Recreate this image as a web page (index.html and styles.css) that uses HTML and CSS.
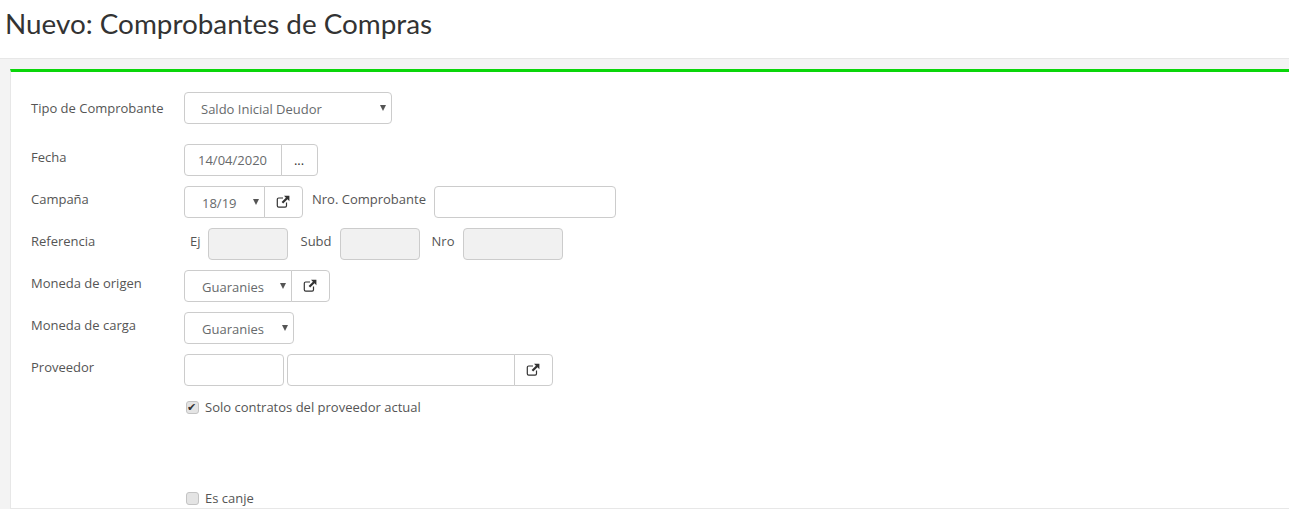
FILE: index.html
```html
<!DOCTYPE html>
<html lang="es">
<head>
    <meta charset="UTF-8">
    <title>Nuevo: Comprobantes de Compras</title>
    <link rel="stylesheet" href="styles.css">
</head>
<body>
    <svg class="defs" width="0" height="0">
        <symbol id="ext" viewBox="0 0 14 14">
            <path d="M10.5 7.6v3.2a1.4 1.4 0 0 1-1.4 1.4H2.7a1.4 1.4 0 0 1-1.4-1.4V4.4A1.4 1.4 0 0 1 2.7 3H7" fill="none" stroke="#333" stroke-width="1.2"/>
            <path d="M8 .8h5.4v5.4l-1.9-1.9-4.3 4.3-1.6-1.6 4.3-4.3z" fill="#333"/>
        </symbol>
    </svg>

    <header class="page-head">
        <h1>Nuevo: Comprobantes de Compras</h1>
    </header>

    <main class="page-body">
        <form class="panel">
            <div class="row row-first">
                <label class="lbl">Tipo de Comprobante</label>
                <div class="select w-tipo"><select><option>Saldo Inicial Deudor</option></select></div>
            </div>

            <div class="row">
                <label class="lbl">Fecha</label>
                <div class="group">
                    <input class="ctl w-fecha" type="text" value="14/04/2020">
                    <button class="addon w-dots" type="button">...</button>
                </div>
            </div>

            <div class="row">
                <label class="lbl">Campaña</label>
                <div class="group">
                    <div class="select w-camp"><select><option>18/19</option></select></div>
                    <button class="addon" type="button"><svg class="ico"><use href="#ext"/></svg></button>
                </div>
                <label class="lbl-in nro-comp">Nro. Comprobante</label>
                <input class="ctl solo w-nro" type="text">
            </div>

            <div class="row">
                <label class="lbl">Referencia</label>
                <label class="lbl-in ref-ej">Ej</label>
                <input class="ctl solo w-ref" type="text" disabled>
                <label class="lbl-in ref-subd">Subd</label>
                <input class="ctl solo w-ref" type="text" disabled>
                <label class="lbl-in ref-nro">Nro</label>
                <input class="ctl solo w-ref-last" type="text" disabled>
            </div>

            <div class="row">
                <label class="lbl">Moneda de origen</label>
                <div class="group">
                    <div class="select w-mon"><select><option>Guaranies</option></select></div>
                    <button class="addon" type="button"><svg class="ico"><use href="#ext"/></svg></button>
                </div>
            </div>

            <div class="row">
                <label class="lbl">Moneda de carga</label>
                <div class="select w-carga"><select><option>Guaranies</option></select></div>
            </div>

            <div class="row">
                <label class="lbl">Proveedor</label>
                <input class="ctl solo w-prov" type="text">
                <div class="group prov-name">
                    <input class="ctl w-provname" type="text">
                    <button class="addon" type="button"><svg class="ico"><use href="#ext"/></svg></button>
                </div>
            </div>

            <label class="check check-solo"><input type="checkbox" checked> Solo contratos del proveedor actual</label>
            <label class="check check-canje"><input type="checkbox"> Es canje</label>
        </form>
    </main>
</body>
</html>
```

FILE: styles.css
```css
* {
    box-sizing: border-box;
}

html, body {
    height: 100%;
}

body {
    margin: 0;
    overflow: hidden;
    background: #f3f3f3;
    font-family: 'Open Sans', sans-serif;
    font-size: 13px;
    color: #555;
    display: flex;
    flex-direction: column;
}

.defs {
    position: absolute;
}

.page-head {
    height: 59px;
    flex: none;
    background: #fff;
    border-bottom: 1px solid #e7e7e7;
    padding: 7px 0 0 5px;
}

h1 {
    margin: 0;
    font-family: Lato, sans-serif;
    font-size: 27.85px;
    font-weight: 400;
    line-height: 34px;
    color: #333;
}

.page-body {
    flex: 1;
    min-height: 0;
    padding: 10px 0 0 10px;
}

.panel {
    height: 440px;
    background: #fff;
    border-top: 3px solid #0ad60a;
    border-left: 1px solid #e7e7e7;
    border-bottom: 1px solid #e7e7e7;
    padding: 20px 0 0 20px;
}

.row {
    display: flex;
    height: 32px;
    margin-bottom: 10px;
}

.row-first {
    margin-bottom: 20px;
}

.row-first .lbl {
    padding-top: 7px;
}

.lbl {
    width: 153px;
    flex: none;
    padding-top: 4px;
    line-height: 18px;
}

.lbl-in {
    padding-top: 4px;
    line-height: 18px;
}

.nro-comp {
    margin: 0 8px 0 9px;
}

.ref-ej {
    margin: 0 7px 0 6px;
}

.ref-subd {
    margin: 0 8px 0 13px;
}

.ref-nro {
    margin: 0 9px 0 12px;
}

.ctl, .select select {
    height: 32px;
    border: 1px solid #ccc;
    background: #fff;
    font-family: inherit;
    font-size: 13px;
    color: #676a6c;
    border-radius: 4px;
    outline: none;
}

.ctl {
    padding: 0 12px 0 13px;
}

.ctl:disabled {
    background: #f1f1f1;
}

.select {
    position: relative;
}

.select select {
    width: 100%;
    padding: 2px 0 0 17px;
    appearance: none;
    -webkit-appearance: none;
}

.w-tipo select {
    padding-left: 16px;
}

.select::after {
    content: "";
    position: absolute;
    right: 6px;
    top: 13px;
    border-left: 3.5px solid transparent;
    border-right: 3.5px solid transparent;
    border-top: 6px solid #555;
}

.group {
    display: flex;
}

.group > .ctl, .group > .select select {
    border-radius: 4px 0 0 4px;
}

.addon {
    width: 39px;
    height: 32px;
    margin-left: -1px;
    padding: 0 1px 0 0;
    border: 1px solid #ccc;
    border-radius: 0 4px 4px 0;
    background: #fff;
    font-family: inherit;
    font-size: 13px;
    color: #333;
    display: flex;
    align-items: center;
    justify-content: center;
}

.ico {
    width: 14px;
    height: 14px;
}

.w-tipo { width: 208px; }
.w-fecha { width: 98px; }
.addon.w-dots { width: 37px; }
.w-camp { width: 81px; }
.w-nro { width: 182px; flex: none; }
.w-ref { width: 80px; flex: none; }
.w-ref-last { width: 100px; flex: none; }
.w-mon { width: 108px; }
.w-carga { width: 110px; }
.w-prov { width: 100px; flex: none; }
.w-provname { width: 228px; }

.prov-name {
    margin-left: 3px;
}

.check {
    display: flex;
    align-items: center;
    margin-left: 155px;
    height: 18px;
    line-height: 18px;
}

.check input {
    appearance: none;
    -webkit-appearance: none;
    position: relative;
    width: 13px;
    height: 13px;
    margin: 0 6px 0 0;
    border: 1px solid #c4c4c4;
    border-radius: 3px;
    background: #e4e4e4;
}

.check input:checked::after {
    content: "\2714";
    position: absolute;
    left: 0;
    top: -1px;
    font-family: 'DejaVu Sans', sans-serif;
    font-size: 11px;
    line-height: 13px;
    color: #333;
}

.check-solo {
    margin-top: 12px;
}

.check-canje {
    margin-top: 73px;
}
```
